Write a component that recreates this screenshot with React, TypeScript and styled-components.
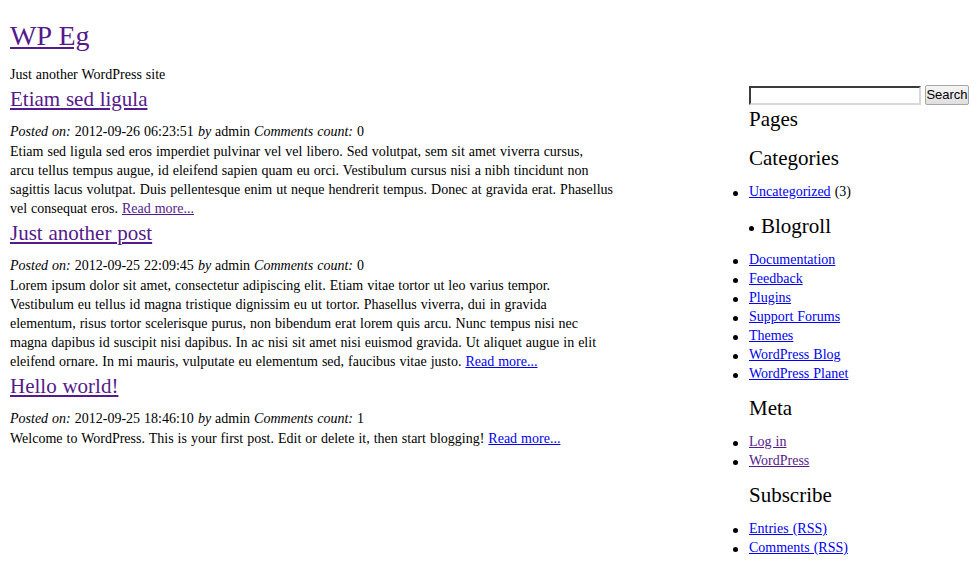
import React from "react";
import styled, { createGlobalStyle } from "styled-components";

const GlobalStyle = createGlobalStyle`
  html, body {
    margin: 0;
    padding: 0;
    background: #ffffff;
  }
  body {
    font-family: "Liberation Serif", "Times New Roman", serif;
    font-size: 14px;
    line-height: 19px;
    word-spacing: 0.5px;
    color: #000000;
  }
`;

const Page = styled.div`
  padding: 0 8px 0 10px;
`;

const Header = styled.header`
  display: flex;
  flex-direction: column;
`;

const SiteTitle = styled.h1`
  margin: 20px 0 0;
  font-size: 28px;
  line-height: 32px;
  font-weight: normal;
`;

const Tagline = styled.div`
  margin-top: 13px;
`;

const Link = styled.a<{ $visited?: boolean }>`
  color: ${(p) => (p.$visited ? "#551a8b" : "#0000ee")};
  text-decoration: underline;
  cursor: pointer;
`;

const Columns = styled.div`
  display: flex;
  justify-content: space-between;
  align-items: flex-start;
`;

const Main = styled.main`
  width: 610px;
`;

const Post = styled.article`
  display: flex;
  flex-direction: column;
`;

const PostTitle = styled.h2`
  margin: 2.5px 0 11.5px;
  font-size: 21px;
  line-height: 24px;
  font-weight: normal;
`;

const Meta = styled.div`
  margin-bottom: 1px;
`;

const Excerpt = styled.p`
  margin: 0;
`;

const Line = styled.span`
  display: block;
  white-space: nowrap;
`;

const Sidebar = styled.aside`
  width: 220px;
  padding-top: 1px;
`;

const SearchForm = styled.form`
  display: flex;
  align-items: center;
  gap: 4px;
  margin: 0 0 2px;
`;

const SearchInput = styled.input`
  box-sizing: border-box;
  width: 172px;
  height: 19px;
  margin: 0;
  padding: 1px 2px;
  border: 2px inset #d8d8d8;
  border-top-color: #8f8f8f;
  border-left-color: #8f8f8f;
  background: #ffffff;
  font-family: "Liberation Sans", Arial, sans-serif;
  font-size: 13px;
  outline: none;
`;

const SearchButton = styled.button`
  box-sizing: border-box;
  width: 45px;
  height: 20px;
  margin: 0;
  padding: 0;
  border: 1px solid #a6a6a6;
  border-radius: 2px;
  background: linear-gradient(#f6f6f6, #dedede);
  color: #000000;
  font-family: "Liberation Sans", Arial, sans-serif;
  font-size: 13px;
  line-height: 18px;
  word-spacing: 0;
`;

const Widget = styled.section<{ $empty?: boolean }>`
  display: flex;
  flex-direction: column;
  margin-bottom: ${(p) => (p.$empty ? "3px" : "0")};
`;

const WidgetTitle = styled.h2`
  margin: 0 0 12px;
  font-size: 21px;
  line-height: 24px;
  font-weight: normal;
`;

const BulletTitleRow = styled.div`
  display: flex;
  align-items: center;
  margin: 0 0 12px;
`;

const SmallDot = styled.span`
  flex: none;
  width: 5px;
  height: 5px;
  border-radius: 50%;
  background: #000000;
  margin: 5px 7px 0 0;
`;

const BulletTitle = styled.h2`
  margin: 0;
  font-size: 21px;
  line-height: 24px;
  font-weight: normal;
`;

const WidgetList = styled.ul`
  margin: 0 0 13px;
  padding: 0;
  list-style: none;
`;

const Item = styled.li`
  position: relative;

  &::before {
    content: "";
    position: absolute;
    left: -16px;
    top: 9px;
    width: 5px;
    height: 5px;
    border-radius: 50%;
    background: #000000;
  }
`;

const posts = [
  {
    title: "Etiam sed ligula",
    date: "2012-09-26 06:23:51",
    count: 0,
    lines: [
      "Etiam sed ligula sed eros imperdiet pulvinar vel vel libero. Sed volutpat, sem sit amet viverra cursus,",
      "arcu tellus tempus augue, id eleifend sapien quam eu orci. Vestibulum cursus nisi a nibh tincidunt non",
      "sagittis lacus volutpat. Duis pellentesque enim ut neque hendrerit tempus. Donec at gravida erat. Phasellus",
      "vel consequat eros.",
    ],
    moreVisited: true,
  },
  {
    title: "Just another post",
    date: "2012-09-25 22:09:45",
    count: 0,
    lines: [
      "Lorem ipsum dolor sit amet, consectetur adipiscing elit. Etiam vitae tortor ut leo varius tempor.",
      "Vestibulum eu tellus id magna tristique dignissim eu ut tortor. Phasellus viverra, dui in gravida",
      "elementum, risus tortor scelerisque purus, non bibendum erat lorem quis arcu. Nunc tempus nisi nec",
      "magna dapibus id suscipit nisi dapibus. In ac nisi sit amet nisi euismod gravida. Ut aliquet augue in elit",
      "eleifend ornare. In mi mauris, vulputate eu elementum sed, faucibus vitae justo.",
    ],
    moreVisited: false,
  },
  {
    title: "Hello world!",
    date: "2012-09-25 18:46:10",
    count: 1,
    lines: [
      "Welcome to WordPress. This is your first post. Edit or delete it, then start blogging!",
    ],
    moreVisited: false,
  },
];

const blogroll = [
  "Documentation",
  "Feedback",
  "Plugins",
  "Support Forums",
  "Themes",
  "WordPress Blog",
  "WordPress Planet",
];

export default function App() {
  return (
    <>
      <GlobalStyle />
      <Page>
        <Header>
          <SiteTitle>
            <Link $visited href="#">
              WP Eg
            </Link>
          </SiteTitle>
          <Tagline>Just another WordPress site</Tagline>
        </Header>
        <Columns>
          <Main>
            {posts.map((p) => (
              <Post key={p.title}>
                <PostTitle>
                  <Link $visited href="#">
                    {p.title}
                  </Link>
                </PostTitle>
                <Meta>
                  <i>Posted on:</i> {p.date} <i>by</i> admin{" "}
                  <i>Comments count:</i> {p.count}
                </Meta>
                <Excerpt>
                  {p.lines.map((l, i) => (
                    <Line key={i}>
                      {l}
                      {i === p.lines.length - 1 && (
                        <>
                          {" "}
                          <Link $visited={p.moreVisited} href="#">
                            Read more...
                          </Link>
                        </>
                      )}
                    </Line>
                  ))}
                </Excerpt>
              </Post>
            ))}
          </Main>
          <Sidebar>
            <SearchForm onSubmit={(e) => e.preventDefault()}>
              <SearchInput type="text" aria-label="Search" />
              <SearchButton type="submit">Search</SearchButton>
            </SearchForm>
            <Widget $empty>
              <WidgetTitle>Pages</WidgetTitle>
            </Widget>
            <Widget>
              <WidgetTitle>Categories</WidgetTitle>
              <WidgetList>
                <Item>
                  <Link href="#">Uncategorized</Link> (3)
                </Item>
              </WidgetList>
            </Widget>
            <Widget>
              <BulletTitleRow>
                <SmallDot />
                <BulletTitle>Blogroll</BulletTitle>
              </BulletTitleRow>
              <WidgetList>
                {blogroll.map((b) => (
                  <Item key={b}>
                    <Link href="#">{b}</Link>
                  </Item>
                ))}
              </WidgetList>
            </Widget>
            <Widget>
              <WidgetTitle>Meta</WidgetTitle>
              <WidgetList>
                <Item>
                  <Link $visited href="#">
                    Log in
                  </Link>
                </Item>
                <Item>
                  <Link $visited href="#">
                    WordPress
                  </Link>
                </Item>
              </WidgetList>
            </Widget>
            <Widget>
              <WidgetTitle>Subscribe</WidgetTitle>
              <WidgetList>
                <Item>
                  <Link href="#">Entries (RSS)</Link>
                </Item>
                <Item>
                  <Link href="#">Comments (RSS)</Link>
                </Item>
              </WidgetList>
            </Widget>
          </Sidebar>
        </Columns>
      </Page>
    </>
  );
}
